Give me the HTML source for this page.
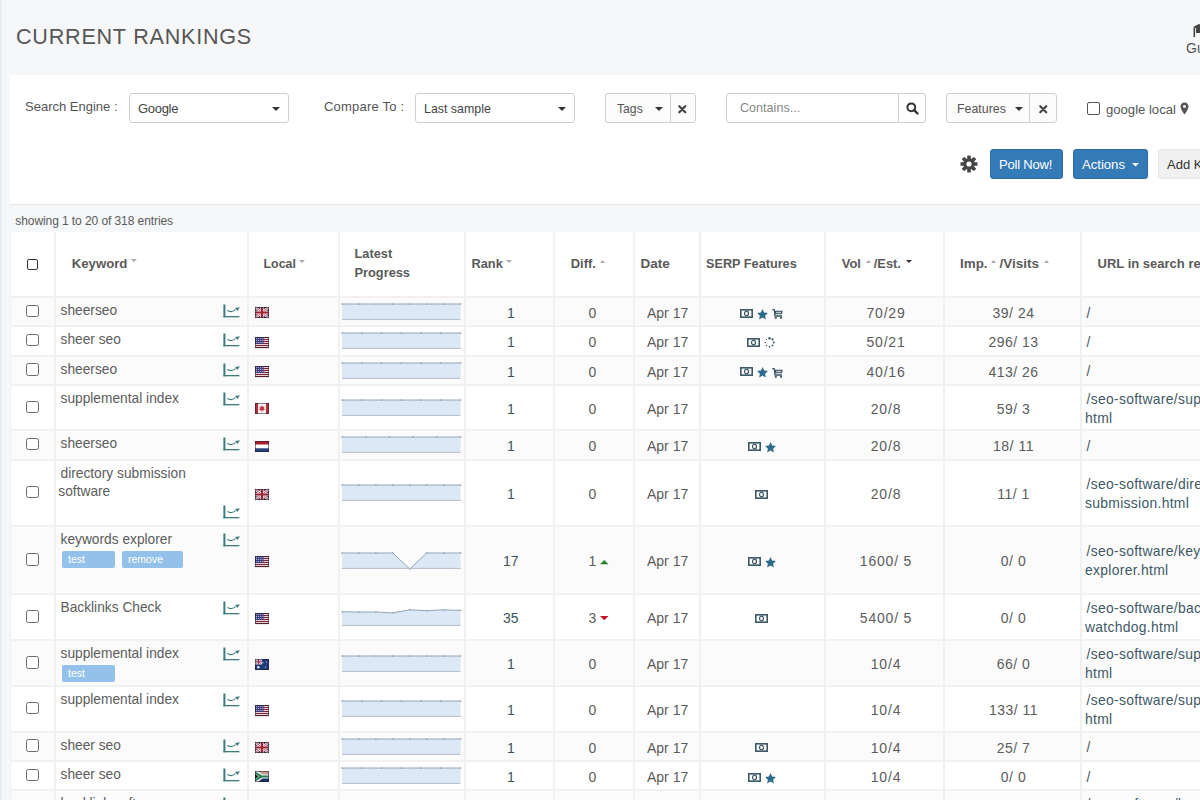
<!DOCTYPE html><html><head><meta charset="utf-8"><style>
html,body{margin:0;padding:0}
body{width:1200px;height:800px;overflow:hidden;background:#f6f7f9;font-family:"Liberation Sans", sans-serif;position:relative}
.a{position:absolute;white-space:nowrap;box-sizing:border-box}
svg{position:absolute;overflow:visible}
</style></head><body><div class="a" style="left:0px;top:0px;width:1.5px;height:800px;background:#e8eaee"></div>
<div class="a" style="left:4px;top:0px;width:2px;height:800px;background:#f2f3f6"></div>
<div class="a" style="left:16px;top:25.72px;font-size:21.6px;line-height:21.6px;color:#565656;font-weight:400;letter-spacing:0.75px;">CURRENT RANKINGS</div>
<div class="a" style="left:1186px;top:41.15px;font-size:14px;line-height:14px;color:#555;font-weight:400;letter-spacing:0px;">Gu</div>
<svg style="left:1192px;top:24px" width="12" height="14" viewBox="0 0 12 14"><path d="M1 3 L7 0 L13 3 L7 6 Z" fill="#444"/><rect x="1.5" y="4" width="1.6" height="9" fill="#444"/><rect x="4" y="5" width="6" height="4" fill="#444"/></svg>
<div class="a" style="left:10px;top:75px;width:1190px;height:130px;background:#fff;border-bottom:1.5px solid #e4e7eb"></div>
<div class="a" style="left:25px;top:100.00px;font-size:13px;line-height:13px;color:#555;font-weight:400;letter-spacing:0px;">Search Engine :</div>
<div class="a" style="left:129px;top:93px;width:160px;height:29.5px;border:1px solid #cfcfcf;border-radius:3px;background:#fff;"></div>
<div class="a" style="left:138px;top:102.00px;font-size:13px;line-height:13px;color:#444;font-weight:400;letter-spacing:-0.3px;">Google</div>
<svg style="left:272px;top:107px" width="8" height="4"><path d="M0 0 L8 0 L4.0 4 Z" fill="#333"/></svg>
<div class="a" style="left:324px;top:100.00px;font-size:13px;line-height:13px;color:#555;font-weight:400;letter-spacing:0.2px;">Compare To :</div>
<div class="a" style="left:415px;top:93px;width:160px;height:29.5px;border:1px solid #cfcfcf;border-radius:3px;background:#fff;"></div>
<div class="a" style="left:424px;top:102.50px;font-size:12.4px;line-height:12.4px;color:#444;font-weight:400;letter-spacing:0px;">Last sample</div>
<svg style="left:558px;top:107px" width="8" height="4"><path d="M0 0 L8 0 L4.0 4 Z" fill="#333"/></svg>
<div class="a" style="left:605px;top:93px;width:90.5px;height:29.5px;border:1px solid #cfcfcf;border-radius:3px;background:#fff;background:#fcfcfc"></div>
<div class="a" style="left:670px;top:93px;width:1px;height:29.5px;background:#cfcfcf"></div>
<div class="a" style="left:617px;top:102.67px;font-size:12.2px;line-height:12.2px;color:#555;font-weight:400;letter-spacing:0px;">Tags</div>
<svg style="left:655px;top:107px" width="8" height="4"><path d="M0 0 L8 0 L4.0 4 Z" fill="#333"/></svg>
<svg style="left:678px;top:104.5px" width="8.5" height="8.5" viewBox="0 0 10 10"><path d="M1.5 1.5 L8.5 8.5 M8.5 1.5 L1.5 8.5" stroke="#444" stroke-width="2.6" stroke-linecap="round"/></svg>
<div class="a" style="left:726px;top:93px;width:200px;height:29.5px;border:1px solid #cfcfcf;border-radius:3px;background:#fff;"></div>
<div class="a" style="left:898px;top:93px;width:1px;height:29.5px;background:#cfcfcf"></div>
<div class="a" style="left:740px;top:102.33px;font-size:12.6px;line-height:12.6px;color:#888;font-weight:400;letter-spacing:0px;">Contains...</div>
<svg style="left:906px;top:102px" width="13" height="13" viewBox="0 0 13 13"><circle cx="5.3" cy="5.3" r="3.9" stroke="#333" stroke-width="2" fill="none"/><path d="M8.2 8.2 L11.5 11.5" stroke="#333" stroke-width="2.4" stroke-linecap="round"/></svg>
<div class="a" style="left:946px;top:93px;width:111px;height:29.5px;border:1px solid #cfcfcf;border-radius:3px;background:#fff;background:#fcfcfc"></div>
<div class="a" style="left:1029px;top:93px;width:1px;height:29.5px;background:#cfcfcf"></div>
<div class="a" style="left:957px;top:102.50px;font-size:12.4px;line-height:12.4px;color:#555;font-weight:400;letter-spacing:0px;">Features</div>
<svg style="left:1014.5px;top:107px" width="8" height="4"><path d="M0 0 L8 0 L4.0 4 Z" fill="#333"/></svg>
<svg style="left:1038.5px;top:104.5px" width="8.5" height="8.5" viewBox="0 0 10 10"><path d="M1.5 1.5 L8.5 8.5 M8.5 1.5 L1.5 8.5" stroke="#444" stroke-width="2.6" stroke-linecap="round"/></svg>
<div class="a" style="left:1087.3px;top:102px;width:13px;height:13px;border:1px solid #555;border-radius:2px;background:#fff"></div>
<div class="a" style="left:1106px;top:102.91px;font-size:13.1px;line-height:13.1px;color:#555;font-weight:400;letter-spacing:0px;">google local</div>
<svg style="left:1180px;top:102px" width="9" height="13" viewBox="0 0 9 13"><path d="M4.5 0.5 C2 0.5 0.5 2.3 0.5 4.5 C0.5 7.2 4.5 12.5 4.5 12.5 C4.5 12.5 8.5 7.2 8.5 4.5 C8.5 2.3 7 0.5 4.5 0.5 Z M4.5 3 A1.5 1.5 0 1 1 4.49 3 Z" fill="#555" fill-rule="evenodd"/></svg>
<svg style="left:959.5px;top:154.5px" width="18" height="18" viewBox="0 0 18 18"><g fill="#464646"><circle cx="9" cy="9" r="5.8"/><rect x="7.2" y="0.5" width="3.6" height="4" rx="0.6" transform="rotate(0 9 9)"/><rect x="7.2" y="0.5" width="3.6" height="4" rx="0.6" transform="rotate(45 9 9)"/><rect x="7.2" y="0.5" width="3.6" height="4" rx="0.6" transform="rotate(90 9 9)"/><rect x="7.2" y="0.5" width="3.6" height="4" rx="0.6" transform="rotate(135 9 9)"/><rect x="7.2" y="0.5" width="3.6" height="4" rx="0.6" transform="rotate(180 9 9)"/><rect x="7.2" y="0.5" width="3.6" height="4" rx="0.6" transform="rotate(225 9 9)"/><rect x="7.2" y="0.5" width="3.6" height="4" rx="0.6" transform="rotate(270 9 9)"/><rect x="7.2" y="0.5" width="3.6" height="4" rx="0.6" transform="rotate(315 9 9)"/></g><circle cx="9" cy="9" r="2.6" fill="#fff"/></svg>
<div class="a" style="left:989.5px;top:149.2px;width:73.5px;height:29.8px;background:#337ab7;border:1px solid #2e6da4;border-radius:3px"></div>
<div class="a" style="left:999px;top:158.00px;font-size:13px;line-height:13px;color:#fff;font-weight:400;letter-spacing:-0.2px;">Poll Now!</div>
<div class="a" style="left:1073px;top:149.2px;width:75px;height:29.8px;background:#337ab7;border:1px solid #2e6da4;border-radius:3px"></div>
<div class="a" style="left:1082px;top:157.91px;font-size:13.1px;line-height:13.1px;color:#fff;font-weight:400;letter-spacing:0px;">Actions</div>
<svg style="left:1131.5px;top:162.5px" width="7" height="3.5"><path d="M0 0 L7 0 L3.5 3.5 Z" fill="#fff"/></svg>
<div class="a" style="left:1158px;top:149.2px;width:60px;height:29.8px;background:#f0f0f0;border:1px solid #e8e8e8;border-radius:3px"></div>
<div class="a" style="left:1167px;top:158.00px;font-size:13px;line-height:13px;color:#333;font-weight:400;letter-spacing:0px;">Add K</div>
<div class="a" style="left:15.3px;top:214.54px;font-size:12px;line-height:12px;color:#5a5a5a;font-weight:400;letter-spacing:-0.08px;">showing 1 to 20 of 318 entries</div>
<div class="a" style="left:10px;top:232px;width:1190px;height:64px;background:#fff"></div>
<div class="a" style="left:10px;top:296px;width:1190px;height:29px;background:#fbfbfb"></div>
<div class="a" style="left:10px;top:325px;width:1190px;height:29.5px;background:#fff"></div>
<div class="a" style="left:10px;top:354.5px;width:1190px;height:29.5px;background:#fbfbfb"></div>
<div class="a" style="left:10px;top:384px;width:1190px;height:45px;background:#fff"></div>
<div class="a" style="left:10px;top:429px;width:1190px;height:29.5px;background:#fbfbfb"></div>
<div class="a" style="left:10px;top:458.5px;width:1190px;height:66.5px;background:#fff"></div>
<div class="a" style="left:10px;top:525px;width:1190px;height:68px;background:#fbfbfb"></div>
<div class="a" style="left:10px;top:593px;width:1190px;height:46px;background:#fff"></div>
<div class="a" style="left:10px;top:639px;width:1190px;height:46px;background:#fbfbfb"></div>
<div class="a" style="left:10px;top:685px;width:1190px;height:45.5px;background:#fff"></div>
<div class="a" style="left:10px;top:730.5px;width:1190px;height:29.5px;background:#fbfbfb"></div>
<div class="a" style="left:10px;top:760px;width:1190px;height:29px;background:#fff"></div>
<div class="a" style="left:10px;top:789px;width:1190px;height:51px;background:#fbfbfb"></div>
<div class="a" style="left:10px;top:296px;width:1190px;height:2px;background:#f1f1f1"></div>
<div class="a" style="left:10px;top:325px;width:1190px;height:2px;background:#f1f1f1"></div>
<div class="a" style="left:10px;top:354.5px;width:1190px;height:2px;background:#f1f1f1"></div>
<div class="a" style="left:10px;top:384px;width:1190px;height:2px;background:#f1f1f1"></div>
<div class="a" style="left:10px;top:429px;width:1190px;height:2px;background:#f1f1f1"></div>
<div class="a" style="left:10px;top:458.5px;width:1190px;height:2px;background:#f1f1f1"></div>
<div class="a" style="left:10px;top:525px;width:1190px;height:2px;background:#f1f1f1"></div>
<div class="a" style="left:10px;top:593px;width:1190px;height:2px;background:#f1f1f1"></div>
<div class="a" style="left:10px;top:639px;width:1190px;height:2px;background:#f1f1f1"></div>
<div class="a" style="left:10px;top:685px;width:1190px;height:2px;background:#f1f1f1"></div>
<div class="a" style="left:10px;top:730.5px;width:1190px;height:2px;background:#f1f1f1"></div>
<div class="a" style="left:10px;top:760px;width:1190px;height:2px;background:#f1f1f1"></div>
<div class="a" style="left:10px;top:789px;width:1190px;height:2px;background:#f1f1f1"></div>
<div class="a" style="left:53.5px;top:232px;width:2px;height:600px;background:#f1f1f1"></div>
<div class="a" style="left:246.5px;top:232px;width:2px;height:600px;background:#f1f1f1"></div>
<div class="a" style="left:338px;top:232px;width:2px;height:600px;background:#f1f1f1"></div>
<div class="a" style="left:463.5px;top:232px;width:2px;height:600px;background:#f1f1f1"></div>
<div class="a" style="left:553px;top:232px;width:2px;height:600px;background:#f1f1f1"></div>
<div class="a" style="left:633px;top:232px;width:2px;height:600px;background:#f1f1f1"></div>
<div class="a" style="left:699px;top:232px;width:2px;height:600px;background:#f1f1f1"></div>
<div class="a" style="left:824px;top:232px;width:2px;height:600px;background:#f1f1f1"></div>
<div class="a" style="left:943px;top:232px;width:2px;height:600px;background:#f1f1f1"></div>
<div class="a" style="left:1080px;top:232px;width:2px;height:600px;background:#f1f1f1"></div>
<div class="a" style="left:10px;top:232px;width:1px;height:600px;background:#f3f3f3"></div>
<div class="a" style="left:26.8px;top:258.8px;width:11.6px;height:11.6px;border:1.5px solid #333;border-radius:2px;background:#fff"></div>
<div class="a" style="left:71.7px;top:256.83px;font-size:13.2px;line-height:13.2px;color:#5a5a5a;font-weight:700;letter-spacing:0px;">Keyword</div>
<svg style="left:131px;top:259px" width="6" height="3"><path d="M0 0 L6 0 L3 3 Z" fill="#aaa"/></svg>
<div class="a" style="left:263.5px;top:257.80px;font-size:12.4px;line-height:12.4px;color:#5a5a5a;font-weight:700;letter-spacing:0px;">Local</div>
<svg style="left:299px;top:259.5px" width="6" height="3"><path d="M0 0 L6 0 L3 3 Z" fill="#aaa"/></svg>
<div class="a" style="left:354.5px;top:247.66px;font-size:12.8px;line-height:12.8px;color:#5a5a5a;font-weight:700;letter-spacing:0px;">Latest</div>
<div class="a" style="left:354.5px;top:266.66px;font-size:12.8px;line-height:12.8px;color:#5a5a5a;font-weight:700;letter-spacing:0px;">Progress</div>
<div class="a" style="left:471.5px;top:257.86px;font-size:12.8px;line-height:12.8px;color:#5a5a5a;font-weight:700;letter-spacing:0px;">Rank</div>
<svg style="left:506px;top:259.5px" width="6" height="3"><path d="M0 0 L6 0 L3 3 Z" fill="#aaa"/></svg>
<div class="a" style="left:570.8px;top:257.78px;font-size:12.9px;line-height:12.9px;color:#5a5a5a;font-weight:700;letter-spacing:0px;">Diff.</div>
<svg style="left:600px;top:259.5px" width="5" height="3"><path d="M0 3 L5 3 L2.5 0 Z" fill="#aaa"/></svg>
<div class="a" style="left:640.5px;top:256.87px;font-size:13.5px;line-height:13.5px;color:#5a5a5a;font-weight:700;letter-spacing:0px;">Date</div>
<div class="a" style="left:706px;top:257.55px;font-size:12.7px;line-height:12.7px;color:#5a5a5a;font-weight:700;letter-spacing:0px;">SERP Features</div>
<div class="a" style="left:841.7px;top:257.30px;font-size:13px;line-height:13px;color:#5a5a5a;font-weight:700;letter-spacing:0px;">Vol</div>
<svg style="left:866px;top:259.5px" width="5" height="3"><path d="M0 3 L5 3 L2.5 0 Z" fill="#aaa"/></svg>
<div class="a" style="left:873.8px;top:257.86px;font-size:12.8px;line-height:12.8px;color:#5a5a5a;font-weight:700;letter-spacing:0px;">/Est.</div>
<svg style="left:905.5px;top:259.5px" width="6" height="3"><path d="M0 0 L6 0 L3 3 Z" fill="#333"/></svg>
<div class="a" style="left:960px;top:257.26px;font-size:13.4px;line-height:13.4px;color:#5a5a5a;font-weight:700;letter-spacing:0px;">Imp.</div>
<svg style="left:991px;top:259.5px" width="5" height="3"><path d="M0 3 L5 3 L2.5 0 Z" fill="#aaa"/></svg>
<div class="a" style="left:999.6px;top:257.17px;font-size:13.5px;line-height:13.5px;color:#5a5a5a;font-weight:700;letter-spacing:0px;">/Visits</div>
<svg style="left:1043.5px;top:259.5px" width="5" height="3"><path d="M0 3 L5 3 L2.5 0 Z" fill="#aaa"/></svg>
<div class="a" style="left:1097.6px;top:257.30px;font-size:13px;line-height:13px;color:#5a5a5a;font-weight:700;letter-spacing:0px;">URL in search results</div>
<div class="a" style="left:26.2px;top:304.5px;width:12.6px;height:12.6px;border:1.3px solid #6a6a6a;border-radius:2.5px;background:#fff"></div>
<div class="a" style="left:60.5px;top:304.16px;font-size:13.75px;line-height:13.75px;color:#5c5c5c;font-weight:400;letter-spacing:0px;">sheerseo</div>
<svg style="left:222.5px;top:304px" width="17" height="14" viewBox="0 0 17 14"><rect x="0.4" y="0.5" width="2" height="12.8" fill="#3d7b7d"/><rect x="0.4" y="12" width="16" height="1.3" fill="#3d7b7d"/><path d="M4.3 6.4 Q8 9.2 12.6 5.6" stroke="#3d7b7d" stroke-width="1.15" fill="none"/><path d="M12.1 4 L16.9 3.2 L14.4 7.1 Z" fill="#3d7b7d"/></svg>
<svg style="left:255px;top:307.3px" width="14" height="11" viewBox="0 0 14 11"><rect width="14" height="11" fill="#3a3556"/><path d="M0 0 L14 11 M14 0 L0 11" stroke="#f2e4ea" stroke-width="2.4"/><path d="M0 0 L14 11 M14 0 L0 11" stroke="#a8283a" stroke-width="0.8"/><path d="M7 0 V11 M0 5.5 H14" stroke="#f2e4ea" stroke-width="3.6"/><path d="M7 0 V11 M0 5.5 H14" stroke="#9e2434" stroke-width="2.2"/><rect x="0.35" y="0.35" width="13.3" height="10.3" fill="none" stroke="#1e1e2a" stroke-opacity="0.75" stroke-width="0.7"/></svg>
<svg style="left:342.3px;top:303.2px" width="119.5" height="17.4"><polygon points="0,16.40 0.00,1.00 16.93,1.00 33.86,1.00 50.79,1.00 67.71,1.00 84.64,1.00 101.57,1.00 118.50,1.00 118.50,16.40" fill="#dce8f5"/><polyline points="0.00,1.00 16.93,1.00 33.86,1.00 50.79,1.00 67.71,1.00 84.64,1.00 101.57,1.00 118.50,1.00" fill="none" stroke="#92a6ba" stroke-width="1"/><line x1="0" y1="16.40" x2="118.50" y2="16.40" stroke="#b4bcc6" stroke-width="1"/><rect x="-0.60" y="0.40" width="1.3" height="1.3" fill="#8a9aab"/><rect x="16.33" y="0.40" width="1.3" height="1.3" fill="#8a9aab"/><rect x="33.26" y="0.40" width="1.3" height="1.3" fill="#8a9aab"/><rect x="50.19" y="0.40" width="1.3" height="1.3" fill="#8a9aab"/><rect x="67.11" y="0.40" width="1.3" height="1.3" fill="#8a9aab"/><rect x="84.04" y="0.40" width="1.3" height="1.3" fill="#8a9aab"/><rect x="100.97" y="0.40" width="1.3" height="1.3" fill="#8a9aab"/><rect x="117.90" y="0.40" width="1.3" height="1.3" fill="#8a9aab"/></svg>
<div class="a" style="left:410.8px;width:200px;text-align:center;top:305.85px;font-size:14px;line-height:14px;color:#3d535c;letter-spacing:0px">1</div>
<div class="a" style="left:492.29999999999995px;width:200px;text-align:center;top:305.85px;font-size:14px;line-height:14px;color:#5c5c5c;letter-spacing:0px">0</div>
<div class="a" style="left:647px;top:305.85px;font-size:14px;line-height:14px;color:#5c5c5c;font-weight:400;letter-spacing:0px;">Apr 17</div>
<svg style="left:740.0px;top:308.7px" width="13" height="9" viewBox="0 0 13 9"><rect x="0.8" y="0.8" width="11.4" height="7.4" fill="none" stroke="#3d5866" stroke-width="1.6"/><ellipse cx="6.5" cy="4.5" rx="2" ry="2.3" fill="none" stroke="#3d5866" stroke-width="1.2"/></svg>
<svg style="left:757.0px;top:308.7px" width="11" height="11" viewBox="0 0 11 11"><path d="M5.50 0.10 L7.12 3.58 L10.92 4.04 L8.12 6.65 L8.85 10.41 L5.50 8.55 L2.15 10.41 L2.88 6.65 L0.08 4.04 L3.88 3.58 Z" fill="#2d6b8a"/></svg>
<svg style="left:772.0px;top:309.0px" width="11" height="10" viewBox="0 0 11 10"><path d="M0.3 0.6 H2.2 L3 7 H10" stroke="#3d5866" stroke-width="1.3" fill="none"/><path d="M2.6 1.8 H10.7 L10 5.3 H3 Z" fill="#3d5866"/><rect x="4.2" y="2.8" width="4.8" height="1.4" fill="#fff" opacity="0.7"/><circle cx="3.8" cy="8.8" r="1.1" fill="#3d5866"/><circle cx="9" cy="8.8" r="1.1" fill="#3d5866"/></svg>
<div class="a" style="left:786px;width:200px;text-align:center;top:305.85px;font-size:14px;line-height:14px;color:#5c5c5c;letter-spacing:0.8px">70/29</div>
<div class="a" style="left:913.5px;width:200px;text-align:center;top:305.85px;font-size:14px;line-height:14px;color:#5c5c5c;letter-spacing:0.5px">39/ 24</div>
<div class="a" style="left:1086.5px;top:306.73px;font-size:13.9px;line-height:13.9px;color:#3e5866;font-weight:400;letter-spacing:0.3px;">/</div>
<div class="a" style="left:26.2px;top:333.75px;width:12.6px;height:12.6px;border:1.3px solid #6a6a6a;border-radius:2.5px;background:#fff"></div>
<div class="a" style="left:60.5px;top:333.16px;font-size:13.75px;line-height:13.75px;color:#5c5c5c;font-weight:400;letter-spacing:0px;">sheer seo</div>
<svg style="left:222.5px;top:333px" width="17" height="14" viewBox="0 0 17 14"><rect x="0.4" y="0.5" width="2" height="12.8" fill="#3d7b7d"/><rect x="0.4" y="12" width="16" height="1.3" fill="#3d7b7d"/><path d="M4.3 6.4 Q8 9.2 12.6 5.6" stroke="#3d7b7d" stroke-width="1.15" fill="none"/><path d="M12.1 4 L16.9 3.2 L14.4 7.1 Z" fill="#3d7b7d"/></svg>
<svg style="left:255px;top:336.55px" width="14" height="11" viewBox="0 0 14 11"><rect width="14" height="11" fill="#f7e4ea"/><rect y="0" width="14" height="1.1" fill="#7a2535"/><rect y="2" width="14" height="1.1" fill="#7a2535"/><rect y="4" width="14" height="1.1" fill="#7a2535"/><rect y="6" width="14" height="1.1" fill="#7a2535"/><rect y="8" width="14" height="1.1" fill="#7a2535"/><rect y="10" width="14" height="1.1" fill="#7a2535"/><rect width="8.5" height="7" fill="#3b3a7a"/><rect x="1.00" y="1.20" width="0.9" height="0.9" fill="#d6d6f6"/><rect x="2.90" y="1.20" width="0.9" height="0.9" fill="#d6d6f6"/><rect x="4.80" y="1.20" width="0.9" height="0.9" fill="#d6d6f6"/><rect x="6.70" y="1.20" width="0.9" height="0.9" fill="#d6d6f6"/><rect x="1.00" y="3.10" width="0.9" height="0.9" fill="#d6d6f6"/><rect x="2.90" y="3.10" width="0.9" height="0.9" fill="#d6d6f6"/><rect x="4.80" y="3.10" width="0.9" height="0.9" fill="#d6d6f6"/><rect x="6.70" y="3.10" width="0.9" height="0.9" fill="#d6d6f6"/><rect x="1.00" y="5.00" width="0.9" height="0.9" fill="#d6d6f6"/><rect x="2.90" y="5.00" width="0.9" height="0.9" fill="#d6d6f6"/><rect x="4.80" y="5.00" width="0.9" height="0.9" fill="#d6d6f6"/><rect x="6.70" y="5.00" width="0.9" height="0.9" fill="#d6d6f6"/><rect x="0.35" y="0.35" width="13.3" height="10.3" fill="none" stroke="#1e1e2a" stroke-opacity="0.75" stroke-width="0.7"/></svg>
<svg style="left:342.3px;top:332.45px" width="119.5" height="17.4"><polygon points="0,16.40 0.00,1.00 19.75,1.00 39.50,1.00 59.25,1.00 79.00,1.00 98.75,1.00 118.50,1.00 118.50,16.40" fill="#dce8f5"/><polyline points="0.00,1.00 19.75,1.00 39.50,1.00 59.25,1.00 79.00,1.00 98.75,1.00 118.50,1.00" fill="none" stroke="#92a6ba" stroke-width="1"/><line x1="0" y1="16.40" x2="118.50" y2="16.40" stroke="#b4bcc6" stroke-width="1"/><rect x="-0.60" y="0.40" width="1.3" height="1.3" fill="#8a9aab"/><rect x="19.15" y="0.40" width="1.3" height="1.3" fill="#8a9aab"/><rect x="38.90" y="0.40" width="1.3" height="1.3" fill="#8a9aab"/><rect x="58.65" y="0.40" width="1.3" height="1.3" fill="#8a9aab"/><rect x="78.40" y="0.40" width="1.3" height="1.3" fill="#8a9aab"/><rect x="98.15" y="0.40" width="1.3" height="1.3" fill="#8a9aab"/><rect x="117.90" y="0.40" width="1.3" height="1.3" fill="#8a9aab"/></svg>
<div class="a" style="left:410.8px;width:200px;text-align:center;top:335.10px;font-size:14px;line-height:14px;color:#3d535c;letter-spacing:0px">1</div>
<div class="a" style="left:492.29999999999995px;width:200px;text-align:center;top:335.10px;font-size:14px;line-height:14px;color:#5c5c5c;letter-spacing:0px">0</div>
<div class="a" style="left:647px;top:335.10px;font-size:14px;line-height:14px;color:#5c5c5c;font-weight:400;letter-spacing:0px;">Apr 17</div>
<svg style="left:747.25px;top:337.95px" width="13" height="9" viewBox="0 0 13 9"><rect x="0.8" y="0.8" width="11.4" height="7.4" fill="none" stroke="#3d5866" stroke-width="1.6"/><ellipse cx="6.5" cy="4.5" rx="2" ry="2.3" fill="none" stroke="#3d5866" stroke-width="1.2"/></svg>
<svg style="left:764.25px;top:336.95px" width="11" height="11" viewBox="0 0 11 11"><circle cx="5.50" cy="1.20" r="1.19" fill="#3d5866"/><circle cx="8.54" cy="2.46" r="1.11" fill="#3d5866"/><circle cx="9.80" cy="5.50" r="1.03" fill="#3d5866"/><circle cx="8.54" cy="8.54" r="0.95" fill="#3d5866"/><circle cx="5.50" cy="9.80" r="0.87" fill="#3d5866"/><circle cx="2.46" cy="8.54" r="0.79" fill="#3d5866"/><circle cx="1.20" cy="5.50" r="0.71" fill="#3d5866"/><circle cx="2.46" cy="2.46" r="0.63" fill="#3d5866"/></svg>
<div class="a" style="left:786px;width:200px;text-align:center;top:335.10px;font-size:14px;line-height:14px;color:#5c5c5c;letter-spacing:0.8px">50/21</div>
<div class="a" style="left:913.5px;width:200px;text-align:center;top:335.10px;font-size:14px;line-height:14px;color:#5c5c5c;letter-spacing:0.5px">296/ 13</div>
<div class="a" style="left:1086.5px;top:335.98px;font-size:13.9px;line-height:13.9px;color:#3e5866;font-weight:400;letter-spacing:0.3px;">/</div>
<div class="a" style="left:26.2px;top:363.25px;width:12.6px;height:12.6px;border:1.3px solid #6a6a6a;border-radius:2.5px;background:#fff"></div>
<div class="a" style="left:60.5px;top:362.66px;font-size:13.75px;line-height:13.75px;color:#5c5c5c;font-weight:400;letter-spacing:0px;">sheerseo</div>
<svg style="left:222.5px;top:362.5px" width="17" height="14" viewBox="0 0 17 14"><rect x="0.4" y="0.5" width="2" height="12.8" fill="#3d7b7d"/><rect x="0.4" y="12" width="16" height="1.3" fill="#3d7b7d"/><path d="M4.3 6.4 Q8 9.2 12.6 5.6" stroke="#3d7b7d" stroke-width="1.15" fill="none"/><path d="M12.1 4 L16.9 3.2 L14.4 7.1 Z" fill="#3d7b7d"/></svg>
<svg style="left:255px;top:366.05px" width="14" height="11" viewBox="0 0 14 11"><rect width="14" height="11" fill="#f7e4ea"/><rect y="0" width="14" height="1.1" fill="#7a2535"/><rect y="2" width="14" height="1.1" fill="#7a2535"/><rect y="4" width="14" height="1.1" fill="#7a2535"/><rect y="6" width="14" height="1.1" fill="#7a2535"/><rect y="8" width="14" height="1.1" fill="#7a2535"/><rect y="10" width="14" height="1.1" fill="#7a2535"/><rect width="8.5" height="7" fill="#3b3a7a"/><rect x="1.00" y="1.20" width="0.9" height="0.9" fill="#d6d6f6"/><rect x="2.90" y="1.20" width="0.9" height="0.9" fill="#d6d6f6"/><rect x="4.80" y="1.20" width="0.9" height="0.9" fill="#d6d6f6"/><rect x="6.70" y="1.20" width="0.9" height="0.9" fill="#d6d6f6"/><rect x="1.00" y="3.10" width="0.9" height="0.9" fill="#d6d6f6"/><rect x="2.90" y="3.10" width="0.9" height="0.9" fill="#d6d6f6"/><rect x="4.80" y="3.10" width="0.9" height="0.9" fill="#d6d6f6"/><rect x="6.70" y="3.10" width="0.9" height="0.9" fill="#d6d6f6"/><rect x="1.00" y="5.00" width="0.9" height="0.9" fill="#d6d6f6"/><rect x="2.90" y="5.00" width="0.9" height="0.9" fill="#d6d6f6"/><rect x="4.80" y="5.00" width="0.9" height="0.9" fill="#d6d6f6"/><rect x="6.70" y="5.00" width="0.9" height="0.9" fill="#d6d6f6"/><rect x="0.35" y="0.35" width="13.3" height="10.3" fill="none" stroke="#1e1e2a" stroke-opacity="0.75" stroke-width="0.7"/></svg>
<svg style="left:342.3px;top:361.95px" width="119.5" height="17.4"><polygon points="0,16.40 0.00,1.00 19.75,1.00 39.50,1.00 59.25,1.00 79.00,1.00 98.75,1.00 118.50,1.00 118.50,16.40" fill="#dce8f5"/><polyline points="0.00,1.00 19.75,1.00 39.50,1.00 59.25,1.00 79.00,1.00 98.75,1.00 118.50,1.00" fill="none" stroke="#92a6ba" stroke-width="1"/><line x1="0" y1="16.40" x2="118.50" y2="16.40" stroke="#b4bcc6" stroke-width="1"/><rect x="-0.60" y="0.40" width="1.3" height="1.3" fill="#8a9aab"/><rect x="19.15" y="0.40" width="1.3" height="1.3" fill="#8a9aab"/><rect x="38.90" y="0.40" width="1.3" height="1.3" fill="#8a9aab"/><rect x="58.65" y="0.40" width="1.3" height="1.3" fill="#8a9aab"/><rect x="78.40" y="0.40" width="1.3" height="1.3" fill="#8a9aab"/><rect x="98.15" y="0.40" width="1.3" height="1.3" fill="#8a9aab"/><rect x="117.90" y="0.40" width="1.3" height="1.3" fill="#8a9aab"/></svg>
<div class="a" style="left:410.8px;width:200px;text-align:center;top:364.60px;font-size:14px;line-height:14px;color:#3d535c;letter-spacing:0px">1</div>
<div class="a" style="left:492.29999999999995px;width:200px;text-align:center;top:364.60px;font-size:14px;line-height:14px;color:#5c5c5c;letter-spacing:0px">0</div>
<div class="a" style="left:647px;top:364.60px;font-size:14px;line-height:14px;color:#5c5c5c;font-weight:400;letter-spacing:0px;">Apr 17</div>
<svg style="left:740.0px;top:367.45px" width="13" height="9" viewBox="0 0 13 9"><rect x="0.8" y="0.8" width="11.4" height="7.4" fill="none" stroke="#3d5866" stroke-width="1.6"/><ellipse cx="6.5" cy="4.5" rx="2" ry="2.3" fill="none" stroke="#3d5866" stroke-width="1.2"/></svg>
<svg style="left:757.0px;top:367.45px" width="11" height="11" viewBox="0 0 11 11"><path d="M5.50 0.10 L7.12 3.58 L10.92 4.04 L8.12 6.65 L8.85 10.41 L5.50 8.55 L2.15 10.41 L2.88 6.65 L0.08 4.04 L3.88 3.58 Z" fill="#2d6b8a"/></svg>
<svg style="left:772.0px;top:367.75px" width="11" height="10" viewBox="0 0 11 10"><path d="M0.3 0.6 H2.2 L3 7 H10" stroke="#3d5866" stroke-width="1.3" fill="none"/><path d="M2.6 1.8 H10.7 L10 5.3 H3 Z" fill="#3d5866"/><rect x="4.2" y="2.8" width="4.8" height="1.4" fill="#fff" opacity="0.7"/><circle cx="3.8" cy="8.8" r="1.1" fill="#3d5866"/><circle cx="9" cy="8.8" r="1.1" fill="#3d5866"/></svg>
<div class="a" style="left:786px;width:200px;text-align:center;top:364.60px;font-size:14px;line-height:14px;color:#5c5c5c;letter-spacing:0.8px">40/16</div>
<div class="a" style="left:913.5px;width:200px;text-align:center;top:364.60px;font-size:14px;line-height:14px;color:#5c5c5c;letter-spacing:0.5px">413/ 26</div>
<div class="a" style="left:1086.5px;top:365.48px;font-size:13.9px;line-height:13.9px;color:#3e5866;font-weight:400;letter-spacing:0.3px;">/</div>
<div class="a" style="left:26.2px;top:400.5px;width:12.6px;height:12.6px;border:1.3px solid #6a6a6a;border-radius:2.5px;background:#fff"></div>
<div class="a" style="left:60.5px;top:392.16px;font-size:13.75px;line-height:13.75px;color:#5c5c5c;font-weight:400;letter-spacing:0px;">supplemental index</div>
<svg style="left:222.5px;top:392px" width="17" height="14" viewBox="0 0 17 14"><rect x="0.4" y="0.5" width="2" height="12.8" fill="#3d7b7d"/><rect x="0.4" y="12" width="16" height="1.3" fill="#3d7b7d"/><path d="M4.3 6.4 Q8 9.2 12.6 5.6" stroke="#3d7b7d" stroke-width="1.15" fill="none"/><path d="M12.1 4 L16.9 3.2 L14.4 7.1 Z" fill="#3d7b7d"/></svg>
<svg style="left:255px;top:403.3px" width="14" height="11" viewBox="0 0 14 11"><rect width="14" height="11" fill="#fbeef0"/><rect width="3" height="11" fill="#b0303c"/><rect x="11" width="3" height="11" fill="#b0303c"/><path d="M7 2.2 L8 4 L9.4 3.5 L8.9 6 L10.1 5.7 L9.2 7.3 L7.3 7.6 V9 H6.7 V7.6 L4.8 7.3 L3.9 5.7 L5.1 6 L4.6 3.5 L6 4 Z" fill="#c03a44"/><rect x="0.35" y="0.35" width="13.3" height="10.3" fill="none" stroke="#1e1e2a" stroke-opacity="0.75" stroke-width="0.7"/></svg>
<svg style="left:342.3px;top:399.2px" width="119.5" height="17.4"><polygon points="0,16.40 0.00,1.00 19.75,1.00 39.50,1.00 59.25,1.00 79.00,1.00 98.75,1.00 118.50,1.00 118.50,16.40" fill="#dce8f5"/><polyline points="0.00,1.00 19.75,1.00 39.50,1.00 59.25,1.00 79.00,1.00 98.75,1.00 118.50,1.00" fill="none" stroke="#92a6ba" stroke-width="1"/><line x1="0" y1="16.40" x2="118.50" y2="16.40" stroke="#b4bcc6" stroke-width="1"/><rect x="-0.60" y="0.40" width="1.3" height="1.3" fill="#8a9aab"/><rect x="19.15" y="0.40" width="1.3" height="1.3" fill="#8a9aab"/><rect x="38.90" y="0.40" width="1.3" height="1.3" fill="#8a9aab"/><rect x="58.65" y="0.40" width="1.3" height="1.3" fill="#8a9aab"/><rect x="78.40" y="0.40" width="1.3" height="1.3" fill="#8a9aab"/><rect x="98.15" y="0.40" width="1.3" height="1.3" fill="#8a9aab"/><rect x="117.90" y="0.40" width="1.3" height="1.3" fill="#8a9aab"/></svg>
<div class="a" style="left:410.8px;width:200px;text-align:center;top:401.85px;font-size:14px;line-height:14px;color:#3d535c;letter-spacing:0px">1</div>
<div class="a" style="left:492.29999999999995px;width:200px;text-align:center;top:401.85px;font-size:14px;line-height:14px;color:#5c5c5c;letter-spacing:0px">0</div>
<div class="a" style="left:647px;top:401.85px;font-size:14px;line-height:14px;color:#5c5c5c;font-weight:400;letter-spacing:0px;">Apr 17</div>
<div class="a" style="left:786px;width:200px;text-align:center;top:401.85px;font-size:14px;line-height:14px;color:#5c5c5c;letter-spacing:0.8px">20/8</div>
<div class="a" style="left:913.5px;width:200px;text-align:center;top:401.85px;font-size:14px;line-height:14px;color:#5c5c5c;letter-spacing:0.5px">59/ 3</div>
<div class="a" style="left:1086.5px;top:392.73px;font-size:13.9px;line-height:13.9px;color:#3e5866;font-weight:400;letter-spacing:0.3px;">/seo-software/supplemental-index</div>
<div class="a" style="left:1085px;top:411.93px;font-size:13.9px;line-height:13.9px;color:#3e5866;font-weight:400;letter-spacing:0.3px;">html</div>
<div class="a" style="left:26.2px;top:437.75px;width:12.6px;height:12.6px;border:1.3px solid #6a6a6a;border-radius:2.5px;background:#fff"></div>
<div class="a" style="left:60.5px;top:437.16px;font-size:13.75px;line-height:13.75px;color:#5c5c5c;font-weight:400;letter-spacing:0px;">sheerseo</div>
<svg style="left:222.5px;top:437px" width="17" height="14" viewBox="0 0 17 14"><rect x="0.4" y="0.5" width="2" height="12.8" fill="#3d7b7d"/><rect x="0.4" y="12" width="16" height="1.3" fill="#3d7b7d"/><path d="M4.3 6.4 Q8 9.2 12.6 5.6" stroke="#3d7b7d" stroke-width="1.15" fill="none"/><path d="M12.1 4 L16.9 3.2 L14.4 7.1 Z" fill="#3d7b7d"/></svg>
<svg style="left:255px;top:440.55px" width="14" height="11" viewBox="0 0 14 11"><rect width="14" height="3.7" fill="#a82030"/><rect y="3.7" width="14" height="3.6" fill="#fff"/><rect y="7.3" width="14" height="3.7" fill="#283f80"/><rect x="0.35" y="0.35" width="13.3" height="10.3" fill="none" stroke="#1e1e2a" stroke-opacity="0.75" stroke-width="0.7"/></svg>
<svg style="left:342.3px;top:436.45px" width="119.5" height="17.4"><polygon points="0,16.40 0.00,1.00 23.70,1.00 47.40,1.00 71.10,1.00 94.80,1.00 118.50,1.00 118.50,16.40" fill="#dce8f5"/><polyline points="0.00,1.00 23.70,1.00 47.40,1.00 71.10,1.00 94.80,1.00 118.50,1.00" fill="none" stroke="#92a6ba" stroke-width="1"/><line x1="0" y1="16.40" x2="118.50" y2="16.40" stroke="#b4bcc6" stroke-width="1"/><rect x="-0.60" y="0.40" width="1.3" height="1.3" fill="#8a9aab"/><rect x="23.10" y="0.40" width="1.3" height="1.3" fill="#8a9aab"/><rect x="46.80" y="0.40" width="1.3" height="1.3" fill="#8a9aab"/><rect x="70.50" y="0.40" width="1.3" height="1.3" fill="#8a9aab"/><rect x="94.20" y="0.40" width="1.3" height="1.3" fill="#8a9aab"/><rect x="117.90" y="0.40" width="1.3" height="1.3" fill="#8a9aab"/></svg>
<div class="a" style="left:410.8px;width:200px;text-align:center;top:439.10px;font-size:14px;line-height:14px;color:#3d535c;letter-spacing:0px">1</div>
<div class="a" style="left:492.29999999999995px;width:200px;text-align:center;top:439.10px;font-size:14px;line-height:14px;color:#5c5c5c;letter-spacing:0px">0</div>
<div class="a" style="left:647px;top:439.10px;font-size:14px;line-height:14px;color:#5c5c5c;font-weight:400;letter-spacing:0px;">Apr 17</div>
<svg style="left:747.5px;top:441.95px" width="13" height="9" viewBox="0 0 13 9"><rect x="0.8" y="0.8" width="11.4" height="7.4" fill="none" stroke="#3d5866" stroke-width="1.6"/><ellipse cx="6.5" cy="4.5" rx="2" ry="2.3" fill="none" stroke="#3d5866" stroke-width="1.2"/></svg>
<svg style="left:764.5px;top:441.95px" width="11" height="11" viewBox="0 0 11 11"><path d="M5.50 0.10 L7.12 3.58 L10.92 4.04 L8.12 6.65 L8.85 10.41 L5.50 8.55 L2.15 10.41 L2.88 6.65 L0.08 4.04 L3.88 3.58 Z" fill="#2d6b8a"/></svg>
<div class="a" style="left:786px;width:200px;text-align:center;top:439.10px;font-size:14px;line-height:14px;color:#5c5c5c;letter-spacing:0.8px">20/8</div>
<div class="a" style="left:913.5px;width:200px;text-align:center;top:439.10px;font-size:14px;line-height:14px;color:#5c5c5c;letter-spacing:0.5px">18/ 11</div>
<div class="a" style="left:1086.5px;top:439.98px;font-size:13.9px;line-height:13.9px;color:#3e5866;font-weight:400;letter-spacing:0.3px;">/</div>
<div class="a" style="left:26.2px;top:485.75px;width:12.6px;height:12.6px;border:1.3px solid #6a6a6a;border-radius:2.5px;background:#fff"></div>
<div class="a" style="left:60.5px;top:466.66px;font-size:13.75px;line-height:13.75px;color:#5c5c5c;font-weight:400;letter-spacing:0px;">directory submission</div>
<div class="a" style="left:58.3px;top:485.16px;font-size:13.75px;line-height:13.75px;color:#5c5c5c;font-weight:400;letter-spacing:0px;">software</div>
<svg style="left:222.5px;top:504.5px" width="17" height="14" viewBox="0 0 17 14"><rect x="0.4" y="0.5" width="2" height="12.8" fill="#3d7b7d"/><rect x="0.4" y="12" width="16" height="1.3" fill="#3d7b7d"/><path d="M4.3 6.4 Q8 9.2 12.6 5.6" stroke="#3d7b7d" stroke-width="1.15" fill="none"/><path d="M12.1 4 L16.9 3.2 L14.4 7.1 Z" fill="#3d7b7d"/></svg>
<svg style="left:255px;top:488.55px" width="14" height="11" viewBox="0 0 14 11"><rect width="14" height="11" fill="#3a3556"/><path d="M0 0 L14 11 M14 0 L0 11" stroke="#f2e4ea" stroke-width="2.4"/><path d="M0 0 L14 11 M14 0 L0 11" stroke="#a8283a" stroke-width="0.8"/><path d="M7 0 V11 M0 5.5 H14" stroke="#f2e4ea" stroke-width="3.6"/><path d="M7 0 V11 M0 5.5 H14" stroke="#9e2434" stroke-width="2.2"/><rect x="0.35" y="0.35" width="13.3" height="10.3" fill="none" stroke="#1e1e2a" stroke-opacity="0.75" stroke-width="0.7"/></svg>
<svg style="left:342.3px;top:484.45px" width="119.5" height="17.4"><polygon points="0,16.40 0.00,1.00 16.93,1.00 33.86,1.00 50.79,1.00 67.71,1.00 84.64,1.00 101.57,1.00 118.50,1.00 118.50,16.40" fill="#dce8f5"/><polyline points="0.00,1.00 16.93,1.00 33.86,1.00 50.79,1.00 67.71,1.00 84.64,1.00 101.57,1.00 118.50,1.00" fill="none" stroke="#92a6ba" stroke-width="1"/><line x1="0" y1="16.40" x2="118.50" y2="16.40" stroke="#b4bcc6" stroke-width="1"/><rect x="-0.60" y="0.40" width="1.3" height="1.3" fill="#8a9aab"/><rect x="16.33" y="0.40" width="1.3" height="1.3" fill="#8a9aab"/><rect x="33.26" y="0.40" width="1.3" height="1.3" fill="#8a9aab"/><rect x="50.19" y="0.40" width="1.3" height="1.3" fill="#8a9aab"/><rect x="67.11" y="0.40" width="1.3" height="1.3" fill="#8a9aab"/><rect x="84.04" y="0.40" width="1.3" height="1.3" fill="#8a9aab"/><rect x="100.97" y="0.40" width="1.3" height="1.3" fill="#8a9aab"/><rect x="117.90" y="0.40" width="1.3" height="1.3" fill="#8a9aab"/></svg>
<div class="a" style="left:410.8px;width:200px;text-align:center;top:487.10px;font-size:14px;line-height:14px;color:#3d535c;letter-spacing:0px">1</div>
<div class="a" style="left:492.29999999999995px;width:200px;text-align:center;top:487.10px;font-size:14px;line-height:14px;color:#5c5c5c;letter-spacing:0px">0</div>
<div class="a" style="left:647px;top:487.10px;font-size:14px;line-height:14px;color:#5c5c5c;font-weight:400;letter-spacing:0px;">Apr 17</div>
<svg style="left:755.0px;top:489.95px" width="13" height="9" viewBox="0 0 13 9"><rect x="0.8" y="0.8" width="11.4" height="7.4" fill="none" stroke="#3d5866" stroke-width="1.6"/><ellipse cx="6.5" cy="4.5" rx="2" ry="2.3" fill="none" stroke="#3d5866" stroke-width="1.2"/></svg>
<div class="a" style="left:786px;width:200px;text-align:center;top:487.10px;font-size:14px;line-height:14px;color:#5c5c5c;letter-spacing:0.8px">20/8</div>
<div class="a" style="left:913.5px;width:200px;text-align:center;top:487.10px;font-size:14px;line-height:14px;color:#5c5c5c;letter-spacing:0.5px">11/ 1</div>
<div class="a" style="left:1086.5px;top:477.98px;font-size:13.9px;line-height:13.9px;color:#3e5866;font-weight:400;letter-spacing:0.3px;">/seo-software/directory-</div>
<div class="a" style="left:1085px;top:497.18px;font-size:13.9px;line-height:13.9px;color:#3e5866;font-weight:400;letter-spacing:0.3px;">submission.html</div>
<div class="a" style="left:26.2px;top:553.0px;width:12.6px;height:12.6px;border:1.3px solid #6a6a6a;border-radius:2.5px;background:#fff"></div>
<div class="a" style="left:60.5px;top:533.16px;font-size:13.75px;line-height:13.75px;color:#5c5c5c;font-weight:400;letter-spacing:0px;">keywords explorer</div>
<svg style="left:222.5px;top:533px" width="17" height="14" viewBox="0 0 17 14"><rect x="0.4" y="0.5" width="2" height="12.8" fill="#3d7b7d"/><rect x="0.4" y="12" width="16" height="1.3" fill="#3d7b7d"/><path d="M4.3 6.4 Q8 9.2 12.6 5.6" stroke="#3d7b7d" stroke-width="1.15" fill="none"/><path d="M12.1 4 L16.9 3.2 L14.4 7.1 Z" fill="#3d7b7d"/></svg>
<div class="a" style="left:62px;top:551.3px;width:53px;height:16.5px;background:#93c1ea;border-radius:2px"></div>
<div class="a" style="left:68px;top:554.41px;font-size:10.5px;line-height:10.5px;color:#fff;font-weight:400;letter-spacing:0px;">test</div>
<div class="a" style="left:122px;top:551.3px;width:61px;height:16.5px;background:#93c1ea;border-radius:2px"></div>
<div class="a" style="left:128px;top:554.41px;font-size:10.5px;line-height:10.5px;color:#fff;font-weight:400;letter-spacing:0px;">remove</div>
<svg style="left:255px;top:555.8px" width="14" height="11" viewBox="0 0 14 11"><rect width="14" height="11" fill="#f7e4ea"/><rect y="0" width="14" height="1.1" fill="#7a2535"/><rect y="2" width="14" height="1.1" fill="#7a2535"/><rect y="4" width="14" height="1.1" fill="#7a2535"/><rect y="6" width="14" height="1.1" fill="#7a2535"/><rect y="8" width="14" height="1.1" fill="#7a2535"/><rect y="10" width="14" height="1.1" fill="#7a2535"/><rect width="8.5" height="7" fill="#3b3a7a"/><rect x="1.00" y="1.20" width="0.9" height="0.9" fill="#d6d6f6"/><rect x="2.90" y="1.20" width="0.9" height="0.9" fill="#d6d6f6"/><rect x="4.80" y="1.20" width="0.9" height="0.9" fill="#d6d6f6"/><rect x="6.70" y="1.20" width="0.9" height="0.9" fill="#d6d6f6"/><rect x="1.00" y="3.10" width="0.9" height="0.9" fill="#d6d6f6"/><rect x="2.90" y="3.10" width="0.9" height="0.9" fill="#d6d6f6"/><rect x="4.80" y="3.10" width="0.9" height="0.9" fill="#d6d6f6"/><rect x="6.70" y="3.10" width="0.9" height="0.9" fill="#d6d6f6"/><rect x="1.00" y="5.00" width="0.9" height="0.9" fill="#d6d6f6"/><rect x="2.90" y="5.00" width="0.9" height="0.9" fill="#d6d6f6"/><rect x="4.80" y="5.00" width="0.9" height="0.9" fill="#d6d6f6"/><rect x="6.70" y="5.00" width="0.9" height="0.9" fill="#d6d6f6"/><rect x="0.35" y="0.35" width="13.3" height="10.3" fill="none" stroke="#1e1e2a" stroke-opacity="0.75" stroke-width="0.7"/></svg>
<svg style="left:342.3px;top:551.7px" width="119.5" height="17.4"><polygon points="0,16.40 0.00,1.00 16.93,1.00 33.86,1.00 50.79,1.00 67.71,17.00 84.64,1.00 101.57,1.00 118.50,1.00 118.50,16.40" fill="#dce8f5"/><polyline points="0.00,1.00 16.93,1.00 33.86,1.00 50.79,1.00 67.71,17.00 84.64,1.00 101.57,1.00 118.50,1.00" fill="none" stroke="#92a6ba" stroke-width="1"/><line x1="0" y1="16.40" x2="118.50" y2="16.40" stroke="#b4bcc6" stroke-width="1"/><rect x="-0.60" y="0.40" width="1.3" height="1.3" fill="#8a9aab"/><rect x="16.33" y="0.40" width="1.3" height="1.3" fill="#8a9aab"/><rect x="33.26" y="0.40" width="1.3" height="1.3" fill="#8a9aab"/><rect x="50.19" y="0.40" width="1.3" height="1.3" fill="#8a9aab"/><rect x="67.11" y="16.40" width="1.3" height="1.3" fill="#8a9aab"/><rect x="84.04" y="0.40" width="1.3" height="1.3" fill="#8a9aab"/><rect x="100.97" y="0.40" width="1.3" height="1.3" fill="#8a9aab"/><rect x="117.90" y="0.40" width="1.3" height="1.3" fill="#8a9aab"/></svg>
<div class="a" style="left:410.8px;width:200px;text-align:center;top:554.35px;font-size:14px;line-height:14px;color:#3d535c;letter-spacing:0px">17</div>
<div class="a" style="left:492.5px;width:200px;text-align:center;top:554.35px;font-size:14px;line-height:14px;color:#5c5c5c;letter-spacing:0px">1</div>
<svg style="left:599.5px;top:559.70px" width="8.5" height="4.2"><path d="M0 4.2 L8.5 4.2 L4.25 0 Z" fill="#2b7d2b"/></svg>
<div class="a" style="left:647px;top:554.35px;font-size:14px;line-height:14px;color:#5c5c5c;font-weight:400;letter-spacing:0px;">Apr 17</div>
<svg style="left:747.5px;top:557.2px" width="13" height="9" viewBox="0 0 13 9"><rect x="0.8" y="0.8" width="11.4" height="7.4" fill="none" stroke="#3d5866" stroke-width="1.6"/><ellipse cx="6.5" cy="4.5" rx="2" ry="2.3" fill="none" stroke="#3d5866" stroke-width="1.2"/></svg>
<svg style="left:764.5px;top:557.2px" width="11" height="11" viewBox="0 0 11 11"><path d="M5.50 0.10 L7.12 3.58 L10.92 4.04 L8.12 6.65 L8.85 10.41 L5.50 8.55 L2.15 10.41 L2.88 6.65 L0.08 4.04 L3.88 3.58 Z" fill="#2d6b8a"/></svg>
<div class="a" style="left:786px;width:200px;text-align:center;top:554.35px;font-size:14px;line-height:14px;color:#5c5c5c;letter-spacing:0.8px">1600/ 5</div>
<div class="a" style="left:913.5px;width:200px;text-align:center;top:554.35px;font-size:14px;line-height:14px;color:#5c5c5c;letter-spacing:0.5px">0/ 0</div>
<div class="a" style="left:1086.5px;top:545.23px;font-size:13.9px;line-height:13.9px;color:#3e5866;font-weight:400;letter-spacing:0.3px;">/seo-software/keywords-</div>
<div class="a" style="left:1085px;top:564.43px;font-size:13.9px;line-height:13.9px;color:#3e5866;font-weight:400;letter-spacing:0.3px;">explorer.html</div>
<div class="a" style="left:26.2px;top:610.0px;width:12.6px;height:12.6px;border:1.3px solid #6a6a6a;border-radius:2.5px;background:#fff"></div>
<div class="a" style="left:60.5px;top:601.16px;font-size:13.75px;line-height:13.75px;color:#5c5c5c;font-weight:400;letter-spacing:0px;">Backlinks Check</div>
<svg style="left:222.5px;top:601px" width="17" height="14" viewBox="0 0 17 14"><rect x="0.4" y="0.5" width="2" height="12.8" fill="#3d7b7d"/><rect x="0.4" y="12" width="16" height="1.3" fill="#3d7b7d"/><path d="M4.3 6.4 Q8 9.2 12.6 5.6" stroke="#3d7b7d" stroke-width="1.15" fill="none"/><path d="M12.1 4 L16.9 3.2 L14.4 7.1 Z" fill="#3d7b7d"/></svg>
<svg style="left:255px;top:612.8px" width="14" height="11" viewBox="0 0 14 11"><rect width="14" height="11" fill="#f7e4ea"/><rect y="0" width="14" height="1.1" fill="#7a2535"/><rect y="2" width="14" height="1.1" fill="#7a2535"/><rect y="4" width="14" height="1.1" fill="#7a2535"/><rect y="6" width="14" height="1.1" fill="#7a2535"/><rect y="8" width="14" height="1.1" fill="#7a2535"/><rect y="10" width="14" height="1.1" fill="#7a2535"/><rect width="8.5" height="7" fill="#3b3a7a"/><rect x="1.00" y="1.20" width="0.9" height="0.9" fill="#d6d6f6"/><rect x="2.90" y="1.20" width="0.9" height="0.9" fill="#d6d6f6"/><rect x="4.80" y="1.20" width="0.9" height="0.9" fill="#d6d6f6"/><rect x="6.70" y="1.20" width="0.9" height="0.9" fill="#d6d6f6"/><rect x="1.00" y="3.10" width="0.9" height="0.9" fill="#d6d6f6"/><rect x="2.90" y="3.10" width="0.9" height="0.9" fill="#d6d6f6"/><rect x="4.80" y="3.10" width="0.9" height="0.9" fill="#d6d6f6"/><rect x="6.70" y="3.10" width="0.9" height="0.9" fill="#d6d6f6"/><rect x="1.00" y="5.00" width="0.9" height="0.9" fill="#d6d6f6"/><rect x="2.90" y="5.00" width="0.9" height="0.9" fill="#d6d6f6"/><rect x="4.80" y="5.00" width="0.9" height="0.9" fill="#d6d6f6"/><rect x="6.70" y="5.00" width="0.9" height="0.9" fill="#d6d6f6"/><rect x="0.35" y="0.35" width="13.3" height="10.3" fill="none" stroke="#1e1e2a" stroke-opacity="0.75" stroke-width="0.7"/></svg>
<svg style="left:342.3px;top:608.7px" width="119.5" height="17.4"><polygon points="0,16.40 0.00,2.80 16.93,3.00 33.86,3.00 50.79,3.90 67.71,0.80 84.64,1.70 101.57,0.80 118.50,1.40 118.50,16.40" fill="#dce8f5"/><polyline points="0.00,2.80 16.93,3.00 33.86,3.00 50.79,3.90 67.71,0.80 84.64,1.70 101.57,0.80 118.50,1.40" fill="none" stroke="#92a6ba" stroke-width="1"/><line x1="0" y1="16.40" x2="118.50" y2="16.40" stroke="#b4bcc6" stroke-width="1"/><rect x="-0.60" y="2.20" width="1.3" height="1.3" fill="#8a9aab"/><rect x="16.33" y="2.40" width="1.3" height="1.3" fill="#8a9aab"/><rect x="33.26" y="2.40" width="1.3" height="1.3" fill="#8a9aab"/><rect x="50.19" y="3.30" width="1.3" height="1.3" fill="#8a9aab"/><rect x="67.11" y="0.20" width="1.3" height="1.3" fill="#8a9aab"/><rect x="84.04" y="1.10" width="1.3" height="1.3" fill="#8a9aab"/><rect x="100.97" y="0.20" width="1.3" height="1.3" fill="#8a9aab"/><rect x="117.90" y="0.80" width="1.3" height="1.3" fill="#8a9aab"/></svg>
<div class="a" style="left:410.8px;width:200px;text-align:center;top:611.35px;font-size:14px;line-height:14px;color:#3d535c;letter-spacing:0px">35</div>
<div class="a" style="left:492.5px;width:200px;text-align:center;top:611.35px;font-size:14px;line-height:14px;color:#5c5c5c;letter-spacing:0px">3</div>
<svg style="left:599.5px;top:616.00px" width="8.5" height="4.2"><path d="M0 0 L8.5 0 L4.25 4.2 Z" fill="#c8102e"/></svg>
<div class="a" style="left:647px;top:611.35px;font-size:14px;line-height:14px;color:#5c5c5c;font-weight:400;letter-spacing:0px;">Apr 17</div>
<svg style="left:755.0px;top:614.2px" width="13" height="9" viewBox="0 0 13 9"><rect x="0.8" y="0.8" width="11.4" height="7.4" fill="none" stroke="#3d5866" stroke-width="1.6"/><ellipse cx="6.5" cy="4.5" rx="2" ry="2.3" fill="none" stroke="#3d5866" stroke-width="1.2"/></svg>
<div class="a" style="left:786px;width:200px;text-align:center;top:611.35px;font-size:14px;line-height:14px;color:#5c5c5c;letter-spacing:0.8px">5400/ 5</div>
<div class="a" style="left:913.5px;width:200px;text-align:center;top:611.35px;font-size:14px;line-height:14px;color:#5c5c5c;letter-spacing:0.5px">0/ 0</div>
<div class="a" style="left:1086.5px;top:602.23px;font-size:13.9px;line-height:13.9px;color:#3e5866;font-weight:400;letter-spacing:0.3px;">/seo-software/backlinks-</div>
<div class="a" style="left:1085px;top:621.43px;font-size:13.9px;line-height:13.9px;color:#3e5866;font-weight:400;letter-spacing:0.3px;">watchdog.html</div>
<div class="a" style="left:26.2px;top:656.0px;width:12.6px;height:12.6px;border:1.3px solid #6a6a6a;border-radius:2.5px;background:#fff"></div>
<div class="a" style="left:60.5px;top:647.16px;font-size:13.75px;line-height:13.75px;color:#5c5c5c;font-weight:400;letter-spacing:0px;">supplemental index</div>
<svg style="left:222.5px;top:647px" width="17" height="14" viewBox="0 0 17 14"><rect x="0.4" y="0.5" width="2" height="12.8" fill="#3d7b7d"/><rect x="0.4" y="12" width="16" height="1.3" fill="#3d7b7d"/><path d="M4.3 6.4 Q8 9.2 12.6 5.6" stroke="#3d7b7d" stroke-width="1.15" fill="none"/><path d="M12.1 4 L16.9 3.2 L14.4 7.1 Z" fill="#3d7b7d"/></svg>
<div class="a" style="left:62px;top:665.3px;width:53px;height:16.5px;background:#93c1ea;border-radius:2px"></div>
<div class="a" style="left:68px;top:668.41px;font-size:10.5px;line-height:10.5px;color:#fff;font-weight:400;letter-spacing:0px;">test</div>
<svg style="left:255px;top:658.8px" width="14" height="11" viewBox="0 0 14 11"><rect width="14" height="11" fill="#1f3a7a"/><rect width="7" height="5.5" fill="#e8dcec"/><path d="M3.5 0 V5.5 M0 2.75 H7" stroke="#b03040" stroke-width="1.1"/><path d="M0 0 L7 5.5 M7 0 L0 5.5" stroke="#6a5a8a" stroke-width="0.6"/><circle cx="3.3" cy="8.3" r="1.3" fill="#dfe8f8"/><circle cx="7.8" cy="3.8" r="0.7" fill="#cfdcf8"/><circle cx="11.5" cy="3" r="0.6" fill="#cfdcf8"/><circle cx="10.5" cy="8" r="0.6" fill="#cfdcf8"/><rect x="0.35" y="0.35" width="13.3" height="10.3" fill="none" stroke="#1e1e2a" stroke-opacity="0.75" stroke-width="0.7"/></svg>
<svg style="left:342.3px;top:654.7px" width="119.5" height="17.4"><polygon points="0,16.40 0.00,1.00 16.93,1.00 33.86,1.00 50.79,1.00 67.71,1.00 84.64,1.00 101.57,1.00 118.50,1.00 118.50,16.40" fill="#dce8f5"/><polyline points="0.00,1.00 16.93,1.00 33.86,1.00 50.79,1.00 67.71,1.00 84.64,1.00 101.57,1.00 118.50,1.00" fill="none" stroke="#92a6ba" stroke-width="1"/><line x1="0" y1="16.40" x2="118.50" y2="16.40" stroke="#b4bcc6" stroke-width="1"/><rect x="-0.60" y="0.40" width="1.3" height="1.3" fill="#8a9aab"/><rect x="16.33" y="0.40" width="1.3" height="1.3" fill="#8a9aab"/><rect x="33.26" y="0.40" width="1.3" height="1.3" fill="#8a9aab"/><rect x="50.19" y="0.40" width="1.3" height="1.3" fill="#8a9aab"/><rect x="67.11" y="0.40" width="1.3" height="1.3" fill="#8a9aab"/><rect x="84.04" y="0.40" width="1.3" height="1.3" fill="#8a9aab"/><rect x="100.97" y="0.40" width="1.3" height="1.3" fill="#8a9aab"/><rect x="117.90" y="0.40" width="1.3" height="1.3" fill="#8a9aab"/></svg>
<div class="a" style="left:410.8px;width:200px;text-align:center;top:657.35px;font-size:14px;line-height:14px;color:#3d535c;letter-spacing:0px">1</div>
<div class="a" style="left:492.29999999999995px;width:200px;text-align:center;top:657.35px;font-size:14px;line-height:14px;color:#5c5c5c;letter-spacing:0px">0</div>
<div class="a" style="left:647px;top:657.35px;font-size:14px;line-height:14px;color:#5c5c5c;font-weight:400;letter-spacing:0px;">Apr 17</div>
<div class="a" style="left:786px;width:200px;text-align:center;top:657.35px;font-size:14px;line-height:14px;color:#5c5c5c;letter-spacing:0.8px">10/4</div>
<div class="a" style="left:913.5px;width:200px;text-align:center;top:657.35px;font-size:14px;line-height:14px;color:#5c5c5c;letter-spacing:0.5px">66/ 0</div>
<div class="a" style="left:1086.5px;top:648.23px;font-size:13.9px;line-height:13.9px;color:#3e5866;font-weight:400;letter-spacing:0.3px;">/seo-software/supplemental-index</div>
<div class="a" style="left:1085px;top:667.43px;font-size:13.9px;line-height:13.9px;color:#3e5866;font-weight:400;letter-spacing:0.3px;">html</div>
<div class="a" style="left:26.2px;top:701.75px;width:12.6px;height:12.6px;border:1.3px solid #6a6a6a;border-radius:2.5px;background:#fff"></div>
<div class="a" style="left:60.5px;top:693.16px;font-size:13.75px;line-height:13.75px;color:#5c5c5c;font-weight:400;letter-spacing:0px;">supplemental index</div>
<svg style="left:222.5px;top:693px" width="17" height="14" viewBox="0 0 17 14"><rect x="0.4" y="0.5" width="2" height="12.8" fill="#3d7b7d"/><rect x="0.4" y="12" width="16" height="1.3" fill="#3d7b7d"/><path d="M4.3 6.4 Q8 9.2 12.6 5.6" stroke="#3d7b7d" stroke-width="1.15" fill="none"/><path d="M12.1 4 L16.9 3.2 L14.4 7.1 Z" fill="#3d7b7d"/></svg>
<svg style="left:255px;top:704.55px" width="14" height="11" viewBox="0 0 14 11"><rect width="14" height="11" fill="#f7e4ea"/><rect y="0" width="14" height="1.1" fill="#7a2535"/><rect y="2" width="14" height="1.1" fill="#7a2535"/><rect y="4" width="14" height="1.1" fill="#7a2535"/><rect y="6" width="14" height="1.1" fill="#7a2535"/><rect y="8" width="14" height="1.1" fill="#7a2535"/><rect y="10" width="14" height="1.1" fill="#7a2535"/><rect width="8.5" height="7" fill="#3b3a7a"/><rect x="1.00" y="1.20" width="0.9" height="0.9" fill="#d6d6f6"/><rect x="2.90" y="1.20" width="0.9" height="0.9" fill="#d6d6f6"/><rect x="4.80" y="1.20" width="0.9" height="0.9" fill="#d6d6f6"/><rect x="6.70" y="1.20" width="0.9" height="0.9" fill="#d6d6f6"/><rect x="1.00" y="3.10" width="0.9" height="0.9" fill="#d6d6f6"/><rect x="2.90" y="3.10" width="0.9" height="0.9" fill="#d6d6f6"/><rect x="4.80" y="3.10" width="0.9" height="0.9" fill="#d6d6f6"/><rect x="6.70" y="3.10" width="0.9" height="0.9" fill="#d6d6f6"/><rect x="1.00" y="5.00" width="0.9" height="0.9" fill="#d6d6f6"/><rect x="2.90" y="5.00" width="0.9" height="0.9" fill="#d6d6f6"/><rect x="4.80" y="5.00" width="0.9" height="0.9" fill="#d6d6f6"/><rect x="6.70" y="5.00" width="0.9" height="0.9" fill="#d6d6f6"/><rect x="0.35" y="0.35" width="13.3" height="10.3" fill="none" stroke="#1e1e2a" stroke-opacity="0.75" stroke-width="0.7"/></svg>
<svg style="left:342.3px;top:700.45px" width="119.5" height="17.4"><polygon points="0,16.40 0.00,1.00 19.75,1.00 39.50,1.00 59.25,1.00 79.00,1.00 98.75,1.00 118.50,1.00 118.50,16.40" fill="#dce8f5"/><polyline points="0.00,1.00 19.75,1.00 39.50,1.00 59.25,1.00 79.00,1.00 98.75,1.00 118.50,1.00" fill="none" stroke="#92a6ba" stroke-width="1"/><line x1="0" y1="16.40" x2="118.50" y2="16.40" stroke="#b4bcc6" stroke-width="1"/><rect x="-0.60" y="0.40" width="1.3" height="1.3" fill="#8a9aab"/><rect x="19.15" y="0.40" width="1.3" height="1.3" fill="#8a9aab"/><rect x="38.90" y="0.40" width="1.3" height="1.3" fill="#8a9aab"/><rect x="58.65" y="0.40" width="1.3" height="1.3" fill="#8a9aab"/><rect x="78.40" y="0.40" width="1.3" height="1.3" fill="#8a9aab"/><rect x="98.15" y="0.40" width="1.3" height="1.3" fill="#8a9aab"/><rect x="117.90" y="0.40" width="1.3" height="1.3" fill="#8a9aab"/></svg>
<div class="a" style="left:410.8px;width:200px;text-align:center;top:703.10px;font-size:14px;line-height:14px;color:#3d535c;letter-spacing:0px">1</div>
<div class="a" style="left:492.29999999999995px;width:200px;text-align:center;top:703.10px;font-size:14px;line-height:14px;color:#5c5c5c;letter-spacing:0px">0</div>
<div class="a" style="left:647px;top:703.10px;font-size:14px;line-height:14px;color:#5c5c5c;font-weight:400;letter-spacing:0px;">Apr 17</div>
<div class="a" style="left:786px;width:200px;text-align:center;top:703.10px;font-size:14px;line-height:14px;color:#5c5c5c;letter-spacing:0.8px">10/4</div>
<div class="a" style="left:913.5px;width:200px;text-align:center;top:703.10px;font-size:14px;line-height:14px;color:#5c5c5c;letter-spacing:0.5px">133/ 11</div>
<div class="a" style="left:1086.5px;top:693.98px;font-size:13.9px;line-height:13.9px;color:#3e5866;font-weight:400;letter-spacing:0.3px;">/seo-software/supplemental-index</div>
<div class="a" style="left:1085px;top:713.18px;font-size:13.9px;line-height:13.9px;color:#3e5866;font-weight:400;letter-spacing:0.3px;">html</div>
<div class="a" style="left:26.2px;top:739.25px;width:12.6px;height:12.6px;border:1.3px solid #6a6a6a;border-radius:2.5px;background:#fff"></div>
<div class="a" style="left:60.5px;top:738.66px;font-size:13.75px;line-height:13.75px;color:#5c5c5c;font-weight:400;letter-spacing:0px;">sheer seo</div>
<svg style="left:222.5px;top:738.5px" width="17" height="14" viewBox="0 0 17 14"><rect x="0.4" y="0.5" width="2" height="12.8" fill="#3d7b7d"/><rect x="0.4" y="12" width="16" height="1.3" fill="#3d7b7d"/><path d="M4.3 6.4 Q8 9.2 12.6 5.6" stroke="#3d7b7d" stroke-width="1.15" fill="none"/><path d="M12.1 4 L16.9 3.2 L14.4 7.1 Z" fill="#3d7b7d"/></svg>
<svg style="left:255px;top:742.05px" width="14" height="11" viewBox="0 0 14 11"><rect width="14" height="11" fill="#3a3556"/><path d="M0 0 L14 11 M14 0 L0 11" stroke="#f2e4ea" stroke-width="2.4"/><path d="M0 0 L14 11 M14 0 L0 11" stroke="#a8283a" stroke-width="0.8"/><path d="M7 0 V11 M0 5.5 H14" stroke="#f2e4ea" stroke-width="3.6"/><path d="M7 0 V11 M0 5.5 H14" stroke="#9e2434" stroke-width="2.2"/><rect x="0.35" y="0.35" width="13.3" height="10.3" fill="none" stroke="#1e1e2a" stroke-opacity="0.75" stroke-width="0.7"/></svg>
<svg style="left:342.3px;top:737.95px" width="119.5" height="17.4"><polygon points="0,16.40 0.00,1.00 16.93,1.00 33.86,1.00 50.79,1.00 67.71,1.00 84.64,1.00 101.57,1.00 118.50,1.00 118.50,16.40" fill="#dce8f5"/><polyline points="0.00,1.00 16.93,1.00 33.86,1.00 50.79,1.00 67.71,1.00 84.64,1.00 101.57,1.00 118.50,1.00" fill="none" stroke="#92a6ba" stroke-width="1"/><line x1="0" y1="16.40" x2="118.50" y2="16.40" stroke="#b4bcc6" stroke-width="1"/><rect x="-0.60" y="0.40" width="1.3" height="1.3" fill="#8a9aab"/><rect x="16.33" y="0.40" width="1.3" height="1.3" fill="#8a9aab"/><rect x="33.26" y="0.40" width="1.3" height="1.3" fill="#8a9aab"/><rect x="50.19" y="0.40" width="1.3" height="1.3" fill="#8a9aab"/><rect x="67.11" y="0.40" width="1.3" height="1.3" fill="#8a9aab"/><rect x="84.04" y="0.40" width="1.3" height="1.3" fill="#8a9aab"/><rect x="100.97" y="0.40" width="1.3" height="1.3" fill="#8a9aab"/><rect x="117.90" y="0.40" width="1.3" height="1.3" fill="#8a9aab"/></svg>
<div class="a" style="left:410.8px;width:200px;text-align:center;top:740.60px;font-size:14px;line-height:14px;color:#3d535c;letter-spacing:0px">1</div>
<div class="a" style="left:492.29999999999995px;width:200px;text-align:center;top:740.60px;font-size:14px;line-height:14px;color:#5c5c5c;letter-spacing:0px">0</div>
<div class="a" style="left:647px;top:740.60px;font-size:14px;line-height:14px;color:#5c5c5c;font-weight:400;letter-spacing:0px;">Apr 17</div>
<svg style="left:755.0px;top:743.45px" width="13" height="9" viewBox="0 0 13 9"><rect x="0.8" y="0.8" width="11.4" height="7.4" fill="none" stroke="#3d5866" stroke-width="1.6"/><ellipse cx="6.5" cy="4.5" rx="2" ry="2.3" fill="none" stroke="#3d5866" stroke-width="1.2"/></svg>
<div class="a" style="left:786px;width:200px;text-align:center;top:740.60px;font-size:14px;line-height:14px;color:#5c5c5c;letter-spacing:0.8px">10/4</div>
<div class="a" style="left:913.5px;width:200px;text-align:center;top:740.60px;font-size:14px;line-height:14px;color:#5c5c5c;letter-spacing:0.5px">25/ 7</div>
<div class="a" style="left:1086.5px;top:741.48px;font-size:13.9px;line-height:13.9px;color:#3e5866;font-weight:400;letter-spacing:0.3px;">/</div>
<div class="a" style="left:26.2px;top:768.5px;width:12.6px;height:12.6px;border:1.3px solid #6a6a6a;border-radius:2.5px;background:#fff"></div>
<div class="a" style="left:60.5px;top:768.16px;font-size:13.75px;line-height:13.75px;color:#5c5c5c;font-weight:400;letter-spacing:0px;">sheer seo</div>
<svg style="left:222.5px;top:768px" width="17" height="14" viewBox="0 0 17 14"><rect x="0.4" y="0.5" width="2" height="12.8" fill="#3d7b7d"/><rect x="0.4" y="12" width="16" height="1.3" fill="#3d7b7d"/><path d="M4.3 6.4 Q8 9.2 12.6 5.6" stroke="#3d7b7d" stroke-width="1.15" fill="none"/><path d="M12.1 4 L16.9 3.2 L14.4 7.1 Z" fill="#3d7b7d"/></svg>
<svg style="left:255px;top:771.3px" width="14" height="11" viewBox="0 0 14 11"><rect width="14" height="5.5" fill="#c89a90"/><rect y="5.5" width="14" height="5.5" fill="#1a2f6a"/><path d="M0 0 H3 L7.5 3.6 H14 V7.4 H7.5 L3 11 H0 Z" fill="#e6f2ea"/><path d="M0 1 L6.6 5.5 L0 10 Z M0 0.5 L7 4.4 H14 V6.6 H7 L0 10.5 Z" fill="#2e7a5a"/><path d="M0 2.3 L4.4 5.5 L0 8.7 Z" fill="#9ac89a"/><path d="M0 3.2 L3.2 5.5 L0 7.8 Z" fill="#101a10"/><rect x="0.35" y="0.35" width="13.3" height="10.3" fill="none" stroke="#1e1e2a" stroke-opacity="0.75" stroke-width="0.7"/></svg>
<svg style="left:342.3px;top:767.2px" width="119.5" height="17.4"><polygon points="0,16.40 0.00,1.00 19.75,1.00 39.50,1.00 59.25,1.00 79.00,1.00 98.75,1.00 118.50,1.00 118.50,16.40" fill="#dce8f5"/><polyline points="0.00,1.00 19.75,1.00 39.50,1.00 59.25,1.00 79.00,1.00 98.75,1.00 118.50,1.00" fill="none" stroke="#92a6ba" stroke-width="1"/><line x1="0" y1="16.40" x2="118.50" y2="16.40" stroke="#b4bcc6" stroke-width="1"/><rect x="-0.60" y="0.40" width="1.3" height="1.3" fill="#8a9aab"/><rect x="19.15" y="0.40" width="1.3" height="1.3" fill="#8a9aab"/><rect x="38.90" y="0.40" width="1.3" height="1.3" fill="#8a9aab"/><rect x="58.65" y="0.40" width="1.3" height="1.3" fill="#8a9aab"/><rect x="78.40" y="0.40" width="1.3" height="1.3" fill="#8a9aab"/><rect x="98.15" y="0.40" width="1.3" height="1.3" fill="#8a9aab"/><rect x="117.90" y="0.40" width="1.3" height="1.3" fill="#8a9aab"/></svg>
<div class="a" style="left:410.8px;width:200px;text-align:center;top:769.85px;font-size:14px;line-height:14px;color:#3d535c;letter-spacing:0px">1</div>
<div class="a" style="left:492.29999999999995px;width:200px;text-align:center;top:769.85px;font-size:14px;line-height:14px;color:#5c5c5c;letter-spacing:0px">0</div>
<div class="a" style="left:647px;top:769.85px;font-size:14px;line-height:14px;color:#5c5c5c;font-weight:400;letter-spacing:0px;">Apr 17</div>
<svg style="left:747.5px;top:772.7px" width="13" height="9" viewBox="0 0 13 9"><rect x="0.8" y="0.8" width="11.4" height="7.4" fill="none" stroke="#3d5866" stroke-width="1.6"/><ellipse cx="6.5" cy="4.5" rx="2" ry="2.3" fill="none" stroke="#3d5866" stroke-width="1.2"/></svg>
<svg style="left:764.5px;top:772.7px" width="11" height="11" viewBox="0 0 11 11"><path d="M5.50 0.10 L7.12 3.58 L10.92 4.04 L8.12 6.65 L8.85 10.41 L5.50 8.55 L2.15 10.41 L2.88 6.65 L0.08 4.04 L3.88 3.58 Z" fill="#2d6b8a"/></svg>
<div class="a" style="left:786px;width:200px;text-align:center;top:769.85px;font-size:14px;line-height:14px;color:#5c5c5c;letter-spacing:0.8px">10/4</div>
<div class="a" style="left:913.5px;width:200px;text-align:center;top:769.85px;font-size:14px;line-height:14px;color:#5c5c5c;letter-spacing:0.5px">0/ 0</div>
<div class="a" style="left:1086.5px;top:770.73px;font-size:13.9px;line-height:13.9px;color:#3e5866;font-weight:400;letter-spacing:0.3px;">/</div>
<div class="a" style="left:26.2px;top:805.5px;width:12.6px;height:12.6px;border:1.3px solid #6a6a6a;border-radius:2.5px;background:#fff"></div>
<div class="a" style="left:60.5px;top:797.16px;font-size:13.75px;line-height:13.75px;color:#5c5c5c;font-weight:400;letter-spacing:0px;">backlink software</div>
<svg style="left:222.5px;top:797px" width="17" height="14" viewBox="0 0 17 14"><rect x="0.4" y="0.5" width="2" height="12.8" fill="#3d7b7d"/><rect x="0.4" y="12" width="16" height="1.3" fill="#3d7b7d"/><path d="M4.3 6.4 Q8 9.2 12.6 5.6" stroke="#3d7b7d" stroke-width="1.15" fill="none"/><path d="M12.1 4 L16.9 3.2 L14.4 7.1 Z" fill="#3d7b7d"/></svg>
<svg style="left:255px;top:808.3px" width="14" height="11" viewBox="0 0 14 11"><rect width="14" height="11" fill="#f7e4ea"/><rect y="0" width="14" height="1.1" fill="#7a2535"/><rect y="2" width="14" height="1.1" fill="#7a2535"/><rect y="4" width="14" height="1.1" fill="#7a2535"/><rect y="6" width="14" height="1.1" fill="#7a2535"/><rect y="8" width="14" height="1.1" fill="#7a2535"/><rect y="10" width="14" height="1.1" fill="#7a2535"/><rect width="8.5" height="7" fill="#3b3a7a"/><rect x="1.00" y="1.20" width="0.9" height="0.9" fill="#d6d6f6"/><rect x="2.90" y="1.20" width="0.9" height="0.9" fill="#d6d6f6"/><rect x="4.80" y="1.20" width="0.9" height="0.9" fill="#d6d6f6"/><rect x="6.70" y="1.20" width="0.9" height="0.9" fill="#d6d6f6"/><rect x="1.00" y="3.10" width="0.9" height="0.9" fill="#d6d6f6"/><rect x="2.90" y="3.10" width="0.9" height="0.9" fill="#d6d6f6"/><rect x="4.80" y="3.10" width="0.9" height="0.9" fill="#d6d6f6"/><rect x="6.70" y="3.10" width="0.9" height="0.9" fill="#d6d6f6"/><rect x="1.00" y="5.00" width="0.9" height="0.9" fill="#d6d6f6"/><rect x="2.90" y="5.00" width="0.9" height="0.9" fill="#d6d6f6"/><rect x="4.80" y="5.00" width="0.9" height="0.9" fill="#d6d6f6"/><rect x="6.70" y="5.00" width="0.9" height="0.9" fill="#d6d6f6"/><rect x="0.35" y="0.35" width="13.3" height="10.3" fill="none" stroke="#1e1e2a" stroke-opacity="0.75" stroke-width="0.7"/></svg>
<svg style="left:342.3px;top:804.2px" width="119.5" height="17.4"><polygon points="0,16.40 0.00,1.00 16.93,1.00 33.86,1.00 50.79,1.00 67.71,1.00 84.64,1.00 101.57,1.00 118.50,1.00 118.50,16.40" fill="#dce8f5"/><polyline points="0.00,1.00 16.93,1.00 33.86,1.00 50.79,1.00 67.71,1.00 84.64,1.00 101.57,1.00 118.50,1.00" fill="none" stroke="#92a6ba" stroke-width="1"/><line x1="0" y1="16.40" x2="118.50" y2="16.40" stroke="#b4bcc6" stroke-width="1"/><rect x="-0.60" y="0.40" width="1.3" height="1.3" fill="#8a9aab"/><rect x="16.33" y="0.40" width="1.3" height="1.3" fill="#8a9aab"/><rect x="33.26" y="0.40" width="1.3" height="1.3" fill="#8a9aab"/><rect x="50.19" y="0.40" width="1.3" height="1.3" fill="#8a9aab"/><rect x="67.11" y="0.40" width="1.3" height="1.3" fill="#8a9aab"/><rect x="84.04" y="0.40" width="1.3" height="1.3" fill="#8a9aab"/><rect x="100.97" y="0.40" width="1.3" height="1.3" fill="#8a9aab"/><rect x="117.90" y="0.40" width="1.3" height="1.3" fill="#8a9aab"/></svg>
<div class="a" style="left:410.8px;width:200px;text-align:center;top:806.85px;font-size:14px;line-height:14px;color:#3d535c;letter-spacing:0px">1</div>
<div class="a" style="left:492.29999999999995px;width:200px;text-align:center;top:806.85px;font-size:14px;line-height:14px;color:#5c5c5c;letter-spacing:0px">0</div>
<div class="a" style="left:647px;top:806.85px;font-size:14px;line-height:14px;color:#5c5c5c;font-weight:400;letter-spacing:0px;">Apr 17</div>
<svg style="left:755.0px;top:809.7px" width="13" height="9" viewBox="0 0 13 9"><rect x="0.8" y="0.8" width="11.4" height="7.4" fill="none" stroke="#3d5866" stroke-width="1.6"/><ellipse cx="6.5" cy="4.5" rx="2" ry="2.3" fill="none" stroke="#3d5866" stroke-width="1.2"/></svg>
<div class="a" style="left:786px;width:200px;text-align:center;top:806.85px;font-size:14px;line-height:14px;color:#5c5c5c;letter-spacing:0.8px">10/4</div>
<div class="a" style="left:913.5px;width:200px;text-align:center;top:806.85px;font-size:14px;line-height:14px;color:#5c5c5c;letter-spacing:0.5px">0/ 0</div>
<div class="a" style="left:1086.5px;top:797.73px;font-size:13.9px;line-height:13.9px;color:#3e5866;font-weight:400;letter-spacing:0.3px;">/seo-software/backlinks</div>
<div class="a" style="left:1085px;top:816.93px;font-size:13.9px;line-height:13.9px;color:#3e5866;font-weight:400;letter-spacing:0.3px;">html</div></body></html>
